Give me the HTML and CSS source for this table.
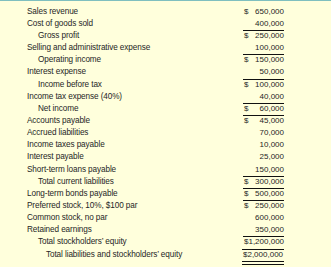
FILE: index.html
```html
<!DOCTYPE html>
<html>
<head>
<meta charset="utf-8">
<link rel="stylesheet" href="styles.css">
</head>
<body>
<div class="sheet">
  <div class="row"><span class="label">Sales revenue</span><span class="amt"><span>$</span><span>650,000</span></span></div>
  <div class="row"><span class="label">Cost of goods sold</span><span class="amt"><span></span><span>400,000</span></span></div>
  <div class="row"><span class="label ind1">Gross profit</span><span class="amt rule"><span>$</span><span>250,000</span></span></div>
  <div class="row"><span class="label">Selling and administrative expense</span><span class="amt"><span></span><span>100,000</span></span></div>
  <div class="row"><span class="label ind1">Operating income</span><span class="amt rule"><span>$</span><span>150,000</span></span></div>
  <div class="row"><span class="label">Interest expense</span><span class="amt"><span></span><span>50,000</span></span></div>
  <div class="row"><span class="label ind1">Income before tax</span><span class="amt rule"><span>$</span><span>100,000</span></span></div>
  <div class="row"><span class="label">Income tax expense (40%)</span><span class="amt"><span></span><span>40,000</span></span></div>
  <div class="row"><span class="label ind1">Net income</span><span class="amt rule"><span>$</span><span>60,000</span></span></div>
  <div class="row"><span class="label">Accounts payable</span><span class="amt rule-thick"><span>$</span><span>45,000</span></span></div>
  <div class="row"><span class="label">Accrued liabilities</span><span class="amt"><span></span><span>70,000</span></span></div>
  <div class="row"><span class="label">Income taxes payable</span><span class="amt"><span></span><span>10,000</span></span></div>
  <div class="row"><span class="label">Interest payable</span><span class="amt"><span></span><span>25,000</span></span></div>
  <div class="row"><span class="label">Short-term loans payable</span><span class="amt"><span></span><span>150,000</span></span></div>
  <div class="row"><span class="label ind1">Total current liabilities</span><span class="amt rule"><span>$</span><span>300,000</span></span></div>
  <div class="row"><span class="label">Long-term bonds payable</span><span class="amt rule"><span>$</span><span>500,000</span></span></div>
  <div class="row"><span class="label">Preferred stock, 10%, $100 par</span><span class="amt rule"><span>$</span><span>250,000</span></span></div>
  <div class="row"><span class="label">Common stock, no par</span><span class="amt"><span></span><span>600,000</span></span></div>
  <div class="row"><span class="label">Retained earnings</span><span class="amt"><span></span><span>350,000</span></span></div>
  <div class="row"><span class="label ind1">Total stockholders’ equity</span><span class="amt rule"><span>$1,200,000</span></span></div>
  <div class="row"><span class="label ind2">Total liabilities and stockholders’ equity</span><span class="amt rule double"><span>$2,000,000</span></span></div>
</div>
</body>
</html>
```

FILE: styles.css
```css
html, body {
  margin: 0;
  padding: 0;
}
body {
  background: #ffffdc;
  border-top: 1px solid #7fbfbf;
  font-family: "Liberation Sans", Arial, sans-serif;
  font-size: 8.2px;
  color: #262626;
  height: 266px;
}
.sheet {
  padding: 4.7px 0 0 27px;
  width: 257px;
}
.row {
  display: flex;
  height: 12.15px;
  line-height: 12.15px;
}
.label {
  flex: 1;
  white-space: nowrap;
  letter-spacing: -0.1px;
}
.ind1 { padding-left: 11px; }
.ind2 { padding-left: 19px; }
.amt {
  width: 41px;
  display: flex;
  justify-content: space-between;
  padding-left: 1px;
  box-sizing: border-box;
  white-space: nowrap;
  font-size: 8px;
}
.rule {
  background: linear-gradient(#111, #111) top left / 100% 1px no-repeat;
}
.rule-thick {
  background: linear-gradient(#111, #111) top left / 100% 2px no-repeat;
  background-position: 0 -1px;
}
.double {
  border-bottom: 4px double #111;
  height: 12.15px;
  box-sizing: content-box;
}
```
